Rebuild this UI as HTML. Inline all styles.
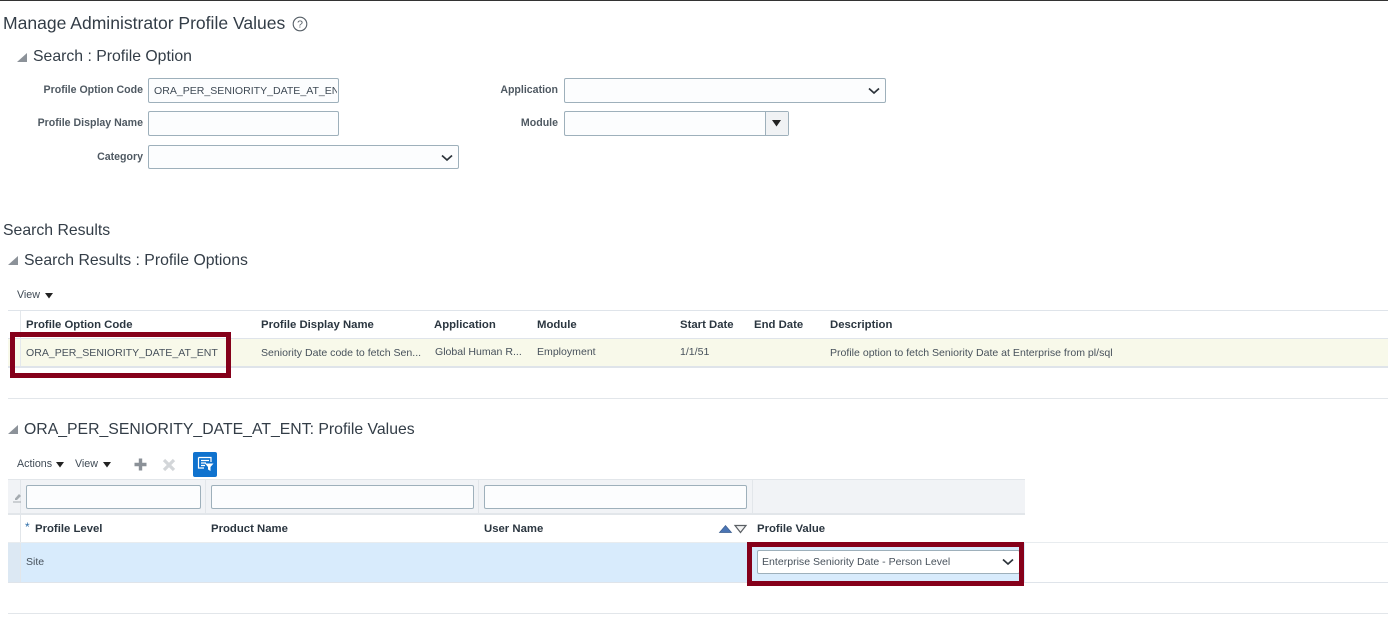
<!DOCTYPE html>
<html><head><meta charset="utf-8">
<style>
html,body{margin:0;padding:0;background:#fff;width:1388px;height:630px;overflow:hidden}
body{position:relative;font-family:"Liberation Sans",sans-serif;color:#3f4a55}
.t{position:absolute;white-space:nowrap;line-height:16px}
.r{position:absolute}
.h1{font-size:17.55px;color:#333d47;line-height:22px}
.h2{font-size:15.8px;color:#333d47;line-height:20px}
.lb{font-size:10.6px;font-weight:bold;color:#4f5962;text-align:right}
.th{font-size:11.35px;font-weight:bold;color:#2b3640}
.td{font-size:10.55px;color:#47515b}
.in{position:absolute;box-sizing:border-box;background:#fcfdfe;border:1px solid #9eb0bb;border-radius:2px}
.tb{font-size:10.7px;color:#3f4a55}
svg{position:absolute;overflow:visible}
</style></head><body>
<div class="r" style="left:0;top:0;width:1388px;height:1px;background:#333"></div>

<div class="t h1" style="left:3px;top:12px">Manage Administrator Profile Values</div>
<svg style="left:292px;top:16px" width="16" height="16" viewBox="0 0 16 16"><circle cx="8" cy="8" r="6.8" fill="none" stroke="#555e66" stroke-width="1.1"/><text x="8" y="11.7" font-size="10.5" text-anchor="middle" fill="#555e66" font-family="Liberation Sans">?</text></svg>

<svg style="left:17px;top:52px" width="11" height="10"><path d="M0 10L10 1V10Z" fill="#8c9299"/></svg>
<div class="t h2" style="left:33px;top:47px">Search : Profile Option</div>

<div class="t lb" style="left:0;width:143px;top:82px">Profile Option Code</div>
<div class="in" style="left:148px;top:78px;width:191px;height:25px"></div>
<div class="t td" style="left:154px;top:83px;width:183px;overflow:hidden;color:#3f4a55">ORA_PER_SENIORITY_DATE_AT_ENT</div>
<div class="t lb" style="left:0;width:143px;top:115px">Profile Display Name</div>
<div class="in" style="left:148px;top:111px;width:191px;height:25px"></div>
<div class="t lb" style="left:0;width:143px;top:149px">Category</div>
<div class="in" style="left:148px;top:145px;width:311px;height:24px"></div>
<svg style="left:441px;top:154px" width="12" height="8"><path d="M1 1.5L6 6L11 1.5" fill="none" stroke="#2c333a" stroke-width="1.7"/></svg>

<div class="t lb" style="left:458px;width:100px;top:82px">Application</div>
<div class="in" style="left:564px;top:78px;width:322px;height:25px"></div>
<svg style="left:868px;top:87px" width="12" height="8"><path d="M1 1.5L6 6L11 1.5" fill="none" stroke="#2c333a" stroke-width="1.7"/></svg>
<div class="t lb" style="left:458px;width:100px;top:115px">Module</div>
<div class="in" style="left:564px;top:111px;width:225px;height:25px"></div>
<div class="r" style="left:765px;top:112px;width:23px;height:23px;background:#f0f2f4;border-left:1px solid #9eb0bb;box-sizing:border-box"></div>
<svg style="left:772px;top:120px" width="10" height="7"><path d="M0 0H9L4.5 6.5Z" fill="#222"/></svg>

<div class="t h2" style="left:3px;top:221px">Search Results</div>
<svg style="left:8px;top:255px" width="11" height="10"><path d="M0 10L10 1V10Z" fill="#8c9299"/></svg>
<div class="t h2" style="left:24px;top:251px">Search Results : Profile Options</div>

<div class="t tb" style="left:17px;top:287px">View</div>
<svg style="left:45px;top:293px" width="9" height="6"><path d="M0 0H8L4 5.5Z" fill="#222"/></svg>

<!-- results table -->
<div class="r" style="left:8px;top:310px;width:1380px;height:1px;background:#dfe4ea"></div>
<div class="r" style="left:8px;top:338px;width:1380px;height:1px;background:#dfe4ea"></div>
<div class="r" style="left:8px;top:339px;width:1380px;height:27px;background:#f8f9ea"></div>
<div class="r" style="left:8px;top:366px;width:1380px;height:2px;background:#dfe4ea"></div>
<div class="r" style="left:20px;top:311px;width:1px;height:55px;background:#e4e8ec"></div>
<div class="t th" style="left:26px;top:317px">Profile Option Code</div>
<div class="t th" style="left:261px;top:317px">Profile Display Name</div>
<div class="t th" style="left:434px;top:317px">Application</div>
<div class="t th" style="left:537px;top:317px">Module</div>
<div class="t th" style="left:680px;top:317px">Start Date</div>
<div class="t th" style="left:754px;top:317px">End Date</div>
<div class="t th" style="left:830px;top:317px">Description</div>
<div class="t td" style="left:26px;top:345px">ORA_PER_SENIORITY_DATE_AT_ENT</div>
<div class="t td" style="left:261px;top:345px">Seniority Date code to fetch Sen...</div>
<div class="t td" style="left:435px;top:344px">Global Human R...</div>
<div class="t td" style="left:537px;top:344px">Employment</div>
<div class="t td" style="left:680px;top:344px">1/1/51</div>
<div class="t td" style="left:830px;top:345px">Profile option to fetch Seniority Date at Enterprise from pl/sql</div>
<div class="r" style="left:10px;top:332px;width:211px;height:36px;border:5px solid #85001a;box-sizing:content-box"></div>

<div class="r" style="left:8px;top:398px;width:1380px;height:1px;background:#e2e6ea"></div>

<svg style="left:8px;top:424px" width="11" height="10"><path d="M0 10L10 1V10Z" fill="#8c9299"/></svg>
<div class="t h2" style="left:24px;top:420px">ORA_PER_SENIORITY_DATE_AT_ENT: Profile Values</div>

<div class="t tb" style="left:17px;top:456px">Actions</div>
<svg style="left:56px;top:462px" width="9" height="6"><path d="M0 0H8L4 5.5Z" fill="#222"/></svg>
<div class="t tb" style="left:75px;top:456px">View</div>
<svg style="left:103px;top:462px" width="9" height="6"><path d="M0 0H8L4 5.5Z" fill="#222"/></svg>
<svg style="left:134px;top:458px" width="13" height="13"><path d="M6.5 0.5V12.5M0.5 6.5H12.5" stroke="#8b9198" stroke-width="3.4" fill="none"/></svg>
<svg style="left:163px;top:459px" width="12" height="12"><path d="M1 1L11 11M11 1L1 11" stroke="#d3d6d9" stroke-width="3.2" fill="none"/></svg>
<div class="r" style="left:193px;top:452px;width:24px;height:25px;background:#0f72ce;border-radius:2px"></div>
<svg style="left:198px;top:457px" width="16" height="15"><path d="M0.5 0.5H13V5M0.5 0.5V11H6" fill="none" stroke="#fff" stroke-width="1.2"/><path d="M3 3.5H11M3 6H8M3 8.5H7" stroke="#fff" stroke-width="1.2"/><path d="M7 6.5H15.5L12.5 10V14L10 12.5V10Z" fill="#fff"/></svg>

<!-- values table -->
<div class="r" style="left:8px;top:479px;width:1017px;height:36px;background:#f1f3f6"></div>
<div class="r" style="left:8px;top:479px;width:1017px;height:1px;background:#e2e6ea"></div>
<div class="r" style="left:8px;top:513px;width:1017px;height:2px;background:#e2e6ea"></div>
<div class="r" style="left:205px;top:480px;width:1px;height:33px;background:#e2e6ea"></div>
<div class="r" style="left:478px;top:480px;width:1px;height:33px;background:#e2e6ea"></div>
<div class="r" style="left:752px;top:480px;width:1px;height:33px;background:#e2e6ea"></div>
<div class="r" style="left:20px;top:480px;width:1px;height:102px;background:#e2e6ea"></div>
<svg style="left:13px;top:492px" width="9" height="11"><path d="M2 6.5L6 2L8 4L4 8H2Z" fill="#a5abb0"/><path d="M0 10H8" stroke="#a5abb0" stroke-width="1"/></svg>
<div class="in" style="left:26px;top:485px;width:175px;height:24px"></div>
<div class="in" style="left:211px;top:485px;width:263px;height:24px"></div>
<div class="in" style="left:484px;top:485px;width:263px;height:24px"></div>

<div class="t" style="left:25px;top:519px;font-size:12px;color:#2f6ea8">*</div>
<div class="t th" style="left:35px;top:521px">Profile Level</div>
<div class="t th" style="left:211px;top:521px">Product Name</div>
<div class="t th" style="left:484px;top:521px">User Name</div>
<svg style="left:719px;top:524px" width="28" height="10"><path d="M0.5 8.5L6.5 1.5L12.5 8.5Z" fill="#4a75b4" stroke="#3d5f90" stroke-width=".7"/><path d="M16 1.5H27L21.5 8.5Z" fill="#f4f4f4" stroke="#5a5f64" stroke-width="1.2"/></svg>
<div class="t th" style="left:757px;top:521px">Profile Value</div>

<div class="r" style="left:8px;top:542px;width:1380px;height:1px;background:#e8ecef"></div>
<div class="r" style="left:8px;top:543px;width:12px;height:39px;background:#dce8f3"></div>
<div class="r" style="left:21px;top:543px;width:1004px;height:39px;background:#d8ebfc"></div>
<div class="r" style="left:8px;top:582px;width:1380px;height:1px;background:#dfe4ea"></div>
<div class="t td" style="left:26px;top:554px">Site</div>
<div class="in" style="left:757px;top:550px;width:263px;height:24px;background:#fff"></div>
<div class="t td" style="left:762px;top:554px">Enterprise Seniority Date - Person Level</div>
<svg style="left:1002px;top:558px" width="12" height="8"><path d="M1 1.5L6 6L11 1.5" fill="none" stroke="#2c333a" stroke-width="1.7"/></svg>
<div class="r" style="left:747px;top:542px;width:267px;height:34px;border:5px solid #85001a;box-sizing:content-box"></div>

<div class="r" style="left:8px;top:613px;width:1380px;height:1px;background:#e2e6ea"></div>
</body></html>
